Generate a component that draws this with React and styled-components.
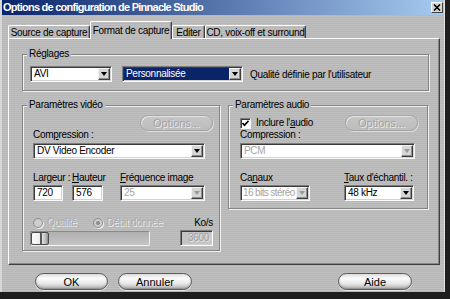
import styled, { createGlobalStyle } from "styled-components";

const uiFont = `"Liberation Sans", Arial, sans-serif`;

const GlobalStyle = createGlobalStyle`
  html, body {
    margin: 0;
    padding: 0;
    background: #1e1e1e;
  }
`;

const Window = styled.div`
  width: 445px;
  height: 292px;
  box-sizing: border-box;
  display: flex;
  flex-direction: column;
  background: repeating-linear-gradient(180deg, #bfbfbf 0px, #bfbfbf 1px, #b7b7b7 1px, #b7b7b7 2px);
  border-left: 2px solid #d8d8d8;
  border-right: 1px solid #e2e2e2;
  font-family: ${uiFont};
  font-size: 10px;
  letter-spacing: -0.3px;
  color: #000;
`;

const TitleBar = styled.div`
  flex: none;
  height: 15px;
  display: flex;
  align-items: center;
  justify-content: space-between;
  background: linear-gradient(90deg, #0a246a 0%, #a6caf0 100%);
`;

const TitleText = styled.span`
  color: #fff;
  font-weight: bold;
  font-size: 11px;
  letter-spacing: -0.75px;
  line-height: 15px;
  padding-left: 1px;
`;

const CloseButton = styled.div`
  width: 12px;
  height: 11px;
  box-sizing: border-box;
  margin-right: 1px;
  display: flex;
  align-items: center;
  justify-content: center;
  background: #d6d6d6;
  border: 1px solid;
  border-color: #fff #404040 #404040 #fff;
`;

const TabRow = styled.div`
  flex: none;
  height: 17px;
  margin-top: 6px;
  padding-left: 6px;
  display: flex;
  align-items: flex-end;
  position: relative;
  z-index: 1;
`;

const Tab = styled.div`
  width: ${(p) => p.$w}px;
  height: ${(p) => (p.$active ? 18 : 13)}px;
  margin-bottom: ${(p) => (p.$active ? -1 : 0)}px;
  box-sizing: border-box;
  display: flex;
  align-items: ${(p) => (p.$active ? "flex-start" : "center")};
  padding-top: ${(p) => (p.$active ? 3 : 1)}px;
  justify-content: center;
  background: repeating-linear-gradient(180deg, #bfbfbf 0px, #bfbfbf 1px, #b7b7b7 1px, #b7b7b7 2px);
  border-top: 1px solid #fff;
  border-left: 1px solid #fff;
  border-right: 1px solid #404040;
  border-radius: 2px 2px 0 0;
  box-shadow: inset -1px 0 0 #8a8a8a;
  line-height: 11px;
  white-space: nowrap;
`;

const Panel = styled.div`
  flex: none;
  margin-left: 6px;
  width: 432px;
  height: 227px;
  box-sizing: border-box;
  border: 1px solid;
  border-color: #fff #404040 #404040 #fff;
  box-shadow: inset -1px -1px 0 #848484;
  padding: 9px 0 0 13px;
  display: flex;
  flex-direction: column;
`;

const GroupBox = styled.fieldset`
  margin: 0;
  min-width: 0;
  width: ${(p) => p.$w}px;
  box-sizing: border-box;
  padding: 0 0 0 4px;
  border: 1px solid #858585;
  box-shadow: 1px 1px 0 #f0f0f0, inset 1px 1px 0 #f0f0f0;
`;

const Legend = styled.legend`
  padding: 0 2px;
  line-height: 12px;
  background: #bbbbbb;
`;

const GroupBody = styled.div`
  padding: ${(p) => p.$pad};
  display: flex;
  flex-direction: column;
`;

const Row = styled.div`
  display: flex;
  align-items: center;
  gap: ${(p) => p.$gap || 0}px;
  margin-top: ${(p) => p.$mt || 0}px;
`;

const GroupRow = styled.div`
  display: flex;
  align-items: flex-start;
  gap: 8px;
  margin-top: 8px;
`;

const SpreadRow = styled.div`
  display: flex;
  align-items: flex-start;
  justify-content: space-between;
  margin-top: 4px;
`;

const RightRow = styled.div`
  display: flex;
  justify-content: flex-end;
  margin-top: 4px;
`;

const FieldLabel = styled.div`
  line-height: 12px;
  margin-top: ${(p) => p.$mt || 0}px;
  white-space: nowrap;
`;

const Key = styled.span`
  text-decoration: underline;
`;

const Plain = styled.span`
  white-space: nowrap;
`;

const FieldGrid = styled.div`
  display: grid;
  grid-template-columns: ${(p) => p.$cols};
  row-gap: 1px;
  margin-top: 13px;
`;

const Sunken = styled.div`
  width: ${(p) => p.$w}px;
  height: 16px;
  box-sizing: border-box;
  border: 1px solid;
  border-color: #7c7c7c #fafafa #fafafa #7c7c7c;
  box-shadow: inset 1px 1px 0 #3a3a3a, inset -1px -1px 0 #d2d2d2;
`;

const SelectBox = styled(Sunken)`
  display: flex;
  padding: 1px;
  background: #fff;
`;

const SelectValue = styled.div`
  flex: 1;
  min-width: 0;
  padding-left: ${(p) => (p.$tight ? 1 : 2)}px;
  letter-spacing: ${(p) => (p.$tight ? "-0.6px" : "inherit")};
  line-height: 12px;
  white-space: nowrap;
  overflow: hidden;
  color: ${(p) => (p.$disabled ? "#a4a4a4" : p.$highlight ? "#fff" : "#000")};
  background: ${(p) => (p.$highlight ? "#0a246a" : "transparent")};
`;

const DropButton = styled.div`
  width: 12px;
  flex: none;
  box-sizing: border-box;
  display: flex;
  align-items: center;
  justify-content: center;
  background: #d6d6d6;
  border: 1px solid;
  border-color: #f4f4f4 #404040 #404040 #f4f4f4;
  box-shadow: inset -1px -1px 0 #8c8c8c;
`;

const Arrow = styled.div`
  width: 0;
  height: 0;
  border-left: 3.5px solid transparent;
  border-right: 3.5px solid transparent;
  border-top: 4px solid ${(p) => (p.$disabled ? "#9a9a9a" : "#000")};
`;

const TextInput = styled(Sunken)`
  background: ${(p) => (p.$disabled ? "#c4c4c4" : "#fff")};
  color: ${(p) => (p.$disabled ? "#a0a0a0" : "#000")};
  text-align: ${(p) => (p.$disabled ? "right" : "left")};
  padding: 1px 3px;
  line-height: 12px;
  text-shadow: ${(p) => (p.$disabled ? "1px 1px 0 #e6e6e6" : "none")};
`;

const PillButton = styled.div`
  width: ${(p) => p.$w}px;
  height: ${(p) => p.$h || 17}px;
  box-sizing: border-box;
  display: flex;
  align-items: center;
  justify-content: center;
  border-radius: 9px;
  font-size: 11px;
  letter-spacing: 0;
  border: 1px solid ${(p) => (p.$disabled ? "#a4a4a4" : "#5c5c5c")};
  background: ${(p) =>
    p.$disabled
      ? "linear-gradient(180deg, #c6c6c6, #bdbdbd)"
      : "linear-gradient(180deg, #dedede 0%, #fbfbfb 30%, #e6e6e6 65%, #b2b2b2 100%)"};
  box-shadow: ${(p) =>
    p.$disabled
      ? "inset 1px 1px 0 #e4e4e4, 1px 1px 0 #dcdcdc"
      : "inset 0 -1px 2px rgba(0,0,0,0.25), 0 1px 0 #e8e8e8"};
  color: ${(p) => (p.$disabled ? "#a2a2a2" : "#000")};
  text-shadow: ${(p) => (p.$disabled ? "1px 1px 0 #ececec" : "none")};
`;

const BottomGrid = styled.div`
  display: grid;
  grid-template-columns: 1fr auto;
  row-gap: 1px;
  margin-top: 16px;
  align-items: center;
`;

const RadioRow = styled.div`
  display: flex;
  align-items: center;
  gap: 16px;
  line-height: 12px;
`;

const RadioItem = styled.div`
  display: flex;
  align-items: center;
  gap: 4px;
  color: #ababab;
  text-shadow: 1px 1px 0 #ececec;
`;

const RadioDot = styled.div`
  width: 10px;
  height: 10px;
  box-sizing: border-box;
  border-radius: 50%;
  border: 1px solid #8c8c8c;
  background: #cdcdcd;
  box-shadow: 1px 1px 0 #ededed;
  display: flex;
  align-items: center;
  justify-content: center;

  &::after {
    content: "";
    width: 4px;
    height: 4px;
    border-radius: 50%;
    background: ${(p) => (p.$on ? "#8a8a8a" : "transparent")};
  }
`;

const KoLabel = styled.div`
  justify-self: end;
  line-height: 12px;
`;

const SliderTrack = styled.div`
  width: 120px;
  height: 15px;
  margin-left: -3px;
  box-sizing: border-box;
  display: flex;
  border: 1px solid;
  border-color: #888 #f2f2f2 #f2f2f2 #888;
  border-radius: 2px;
  background: linear-gradient(180deg, #b0b0b0, #c4c4c4);
`;

const SliderThumb = styled.div`
  width: 18px;
  height: 100%;
  box-sizing: border-box;
  border: 1px solid #4a4a4a;
  border-radius: 2px;
  background: linear-gradient(
    90deg,
    #fcfcfc 0%,
    #ececec 50%,
    #5a5a5a 50%,
    #5a5a5a 60%,
    #e6e6e6 60%,
    #bcbcbc 85%,
    #8a8a8a 100%
  );
`;

const CheckBox = styled.div`
  width: 11px;
  height: 11px;
  box-sizing: border-box;
  background: #fff;
  border: 1px solid;
  border-color: #7c7c7c #fafafa #fafafa #7c7c7c;
  box-shadow: inset 1px 1px 0 #3a3a3a;
  display: flex;
  align-items: center;
  justify-content: center;
`;

const CheckLabel = styled.div`
  display: flex;
  align-items: center;
  gap: 5px;
  margin-top: 2px;
  line-height: 12px;
`;

const ButtonBar = styled.div`
  flex: none;
  display: flex;
  gap: 10px;
  margin-top: 8px;
  padding: 0 32px 0 33px;
`;

const Spacer = styled.div`
  flex: 1;
`;

const Gap = styled.span`
  flex: none;
  width: ${(p) => p.$w}px;
`;

function Select({ w, value, disabled, highlight, tight }) {
  return (
    <SelectBox $w={w}>
      <SelectValue $disabled={disabled} $highlight={highlight} $tight={tight}>
        {value}
      </SelectValue>
      <DropButton>
        <Arrow $disabled={disabled} />
      </DropButton>
    </SelectBox>
  );
}

export default function App() {
  return (
    <>
      <GlobalStyle />
      <Window>
        <TitleBar>
          <TitleText>Options de configuration de Pinnacle Studio</TitleText>
          <CloseButton>
            <svg width="8" height="7" viewBox="0 0 8 7">
              <path d="M1 0.5 L7 6.5 M7 0.5 L1 6.5" stroke="#000" strokeWidth="1.6" />
            </svg>
          </CloseButton>
        </TitleBar>

        <TabRow>
          <Tab $w={82}>Source de capture</Tab>
          <Tab $w={82} $active>
            Format de capture
          </Tab>
          <Tab $w={33}>Editer</Tab>
          <Tab $w={101}>CD, voix-off et surround</Tab>
        </TabRow>

        <Panel>
          <GroupBox $w={407}>
            <Legend>Réglages</Legend>
            <GroupBody $pad="6px 0 8px 3px">
              <Row>
                <Select w={82} value="AVI" />
                <Gap $w={10} />
                <Select w={121} value="Personnalisée" highlight />
                <Gap $w={7} />
                <Plain>Qualité définie par l'utilisateur</Plain>
              </Row>
            </GroupBody>
          </GroupBox>

          <GroupRow>
            <GroupBox $w={198}>
              <Legend>Paramètres vidéo</Legend>
              <GroupBody $pad="0 6px 4px 6px">
                <RightRow>
                  <PillButton $w={73} $h={16} $disabled>
                    Options...
                  </PillButton>
                </RightRow>
                <FieldLabel $mt={-2}>
                  Com<Key>p</Key>ression :
                </FieldLabel>
                <Row $mt={2}>
                  <Select w={172} value="DV Video Encoder" />
                </Row>
                <FieldGrid $cols="39px 48px 85px">
                  <FieldLabel>Largeur :</FieldLabel>
                  <FieldLabel>
                    <Key>H</Key>auteur
                  </FieldLabel>
                  <FieldLabel>
                    <Key>F</Key>réquence image
                  </FieldLabel>
                  <TextInput $w={30}>720</TextInput>
                  <TextInput $w={31}>576</TextInput>
                  <Select w={85} value="25" disabled />
                </FieldGrid>
                <BottomGrid>
                  <RadioRow>
                    <RadioItem>
                      <RadioDot />
                      Qualité
                    </RadioItem>
                    <RadioItem>
                      <RadioDot $on />
                      Débit donnée
                    </RadioItem>
                  </RadioRow>
                  <KoLabel>Ko/s</KoLabel>
                  <SliderTrack>
                    <SliderThumb />
                  </SliderTrack>
                  <TextInput $w={33} $disabled>
                    3600
                  </TextInput>
                </BottomGrid>
              </GroupBody>
            </GroupBox>

            <GroupBox $w={200}>
              <Legend>Paramètres audio</Legend>
              <GroupBody $pad="0 9px 7px 7px">
                <SpreadRow>
                  <CheckLabel>
                    <CheckBox>
                      <svg width="7" height="7" viewBox="0 0 7 7">
                        <path d="M0.5 3 L2.5 5.2 L6.5 0.8" stroke="#000" strokeWidth="1.7" fill="none" />
                      </svg>
                    </CheckBox>
                    <span>
                      Inclure l'<Key>a</Key>udio
                    </span>
                  </CheckLabel>
                  <PillButton $w={73} $h={16} $disabled>
                    Options...
                  </PillButton>
                </SpreadRow>
                <FieldLabel $mt={-2}>Compression :</FieldLabel>
                <Row $mt={2}>
                  <Select w={175} value="PCM" disabled />
                </Row>
                <FieldGrid $cols="104px 71px">
                  <FieldLabel>
                    Ca<Key>n</Key>aux
                  </FieldLabel>
                  <FieldLabel>
                    <Key>T</Key>aux d'échantil. :
                  </FieldLabel>
                  <Select w={70} value="16 bits stéréo" disabled tight />
                  <Select w={70} value="48 kHz" />
                </FieldGrid>
              </GroupBody>
            </GroupBox>
          </GroupRow>
        </Panel>

        <ButtonBar>
          <PillButton $w={73}>OK</PillButton>
          <PillButton $w={74}>Annuler</PillButton>
          <Spacer />
          <PillButton $w={74}>Aide</PillButton>
        </ButtonBar>
      </Window>
    </>
  );
}
